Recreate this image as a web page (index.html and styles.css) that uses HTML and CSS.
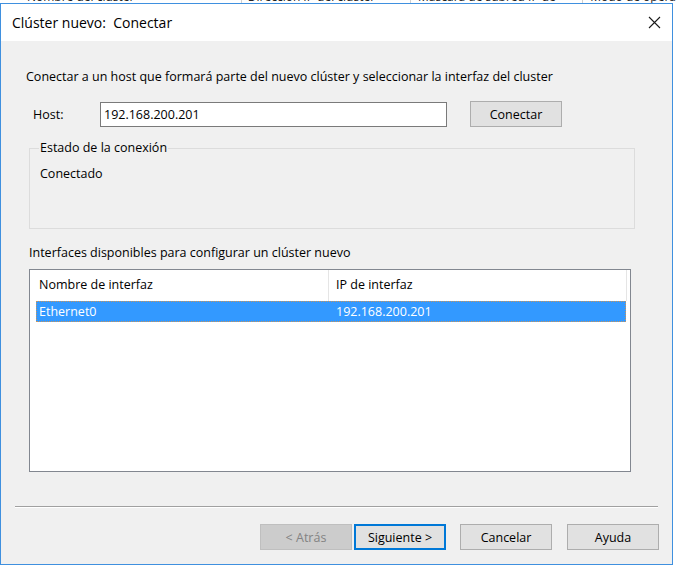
FILE: index.html
```html
<!DOCTYPE html>
<html lang="es">
  <head>
    <meta charset="UTF-8" />
    <meta name="viewport" content="width=device-width, initial-scale=1.0" />
    <title>Clúster nuevo: Conectar</title>
    <link rel="stylesheet" href="styles.css">
  </head>

  <body>
    <!-- columnas de la ventana de atrás, casi tapadas -->
    <div class="behind">
      <span class="behind-col c1">Nombre del clúster</span>
      <span class="behind-col c2">Dirección IP del clúster</span>
      <span class="behind-col c3">Máscara de subred IP de</span>
      <span class="behind-col c4">Modo de opera</span>
    </div>

    <div class="window">
      <header class="titlebar">
        <span class="title">Clúster nuevo:&nbsp; Conectar</span>
        <svg class="close" width="13" height="13" viewBox="0 0 13 13">
          <path d="M1 1 L12 12 M12 1 L1 12" stroke="#1a1a1a" stroke-width="1.1" fill="none" />
        </svg>
      </header>

      <main class="content">
        <p class="intro">Conectar a un host que formará parte del nuevo clúster y seleccionar la interfaz del cluster</p>

        <div class="host-row">
          <label class="host-label" for="host">Host:</label>
          <input class="host-input" id="host" type="text" value="192.168.200.201" />
          <button class="btn btn-connect">Conectar</button>
        </div>

        <fieldset class="group">
          <legend>Estado de la conexión</legend>
          <div class="status">Conectado</div>
        </fieldset>

        <p class="list-caption">Interfaces disponibles para configurar un clúster nuevo</p>

        <section class="listview">
          <div class="lv-header">
            <div class="lv-col lv-col--name">Nombre de interfaz</div>
            <div class="lv-col lv-col--ip">IP de interfaz</div>
          </div>
          <div class="lv-row selected">
            <div class="lv-cell lv-cell--name">Ethernet0</div>
            <div class="lv-cell lv-cell--ip">192.168.200.201</div>
          </div>
        </section>

        <div class="separator"></div>

        <footer class="buttons">
          <button class="btn btn-wide" disabled>&lt; Atrás</button>
          <button class="btn btn-wide btn-default">Siguiente &gt;</button>
          <button class="btn btn-wide btn-cancel">Cancelar</button>
          <button class="btn btn-wide btn-help">Ayuda</button>
        </footer>
      </main>
    </div>
  </body>
</html>
```

FILE: styles.css
```css
* {
  box-sizing: border-box;
}
body {
  margin: 0;
  background: #fff;
  font-family: "Open Sans", "Liberation Sans", sans-serif;
  font-size: 12.5px;
  color: #000;
}

/* ventana de atrás */
.behind {
  height: 3px;
  overflow: hidden;
  display: flex;
  white-space: nowrap;
  font-size: 12px;
  line-height: 12px;
  color: #222;
}
.behind-col {
  display: block;
  margin-top: -9px;
  height: 12px;
  border-right: 1px solid #cfcfcf;
}
.c1 {
  width: 248px;
  padding-left: 27px;
}
.c2 {
  width: 174px;
  padding-left: 6px;
}
.c3 {
  width: 177px;
  padding-left: 7px;
}
.c4 {
  flex: 1;
  padding-left: 7px;
  border-right: 0;
}

/* diálogo */
.window {
  width: 673px;
  height: 562px;
  border: 1px solid #3f90df;
  background: #f0f0f0;
}
.titlebar {
  height: 37px;
  background: #fff;
  display: flex;
  align-items: center;
  justify-content: space-between;
  padding: 0 11px 0 11px;
}
.title {
  font-size: 14px;
  color: #000;
}
.close {
  display: block;
}

.content {
  padding-top: 28px;
}
.intro {
  margin: 0 0 0 25px;
  line-height: 16px;
}

.host-row {
  display: flex;
  align-items: center;
  height: 26px;
  margin-top: 16px;
}
.host-label {
  width: 67px;
  margin-left: 32px;
}
.host-input {
  width: 347px;
  height: 25px;
  border: 1px solid #7a7a7a;
  background: #fff;
  font: inherit;
  padding: 0 0 0 3px;
  color: #000;
  outline: none;
}
.btn {
  height: 26px;
  border: 1px solid #adadad;
  background: #e1e1e1;
  font: inherit;
  color: #000;
  padding: 0;
}
.btn-connect {
  width: 92px;
  margin-left: 23px;
}

.group {
  margin: 13px 0 0 28px;
  width: 606px;
  height: 89px;
  padding: 0 0 0 9px;
  border: 1px solid #dcdcdc;
  min-inline-size: 0;
}
.group legend {
  padding: 0 1px;
  line-height: 16px;
}
.status {
  margin: 10px 0 0 1px;
  line-height: 16px;
}

.list-caption {
  margin: 16px 0 0 28px;
  line-height: 16px;
}

.listview {
  margin: 8px 0 0 28px;
  width: 602px;
  height: 203px;
  border: 1px solid #828790;
  background: #fff;
}
.lv-header {
  display: flex;
  height: 31px;
}
.lv-col {
  line-height: 30px;
  border-right: 1px solid #e5e5e5;
  height: 31px;
}
.lv-col--name {
  width: 299px;
  padding-left: 9px;
}
.lv-col--ip {
  width: 298px;
  padding-left: 7px;
}
.lv-row {
  display: flex;
  margin-left: 6px;
  width: 590px;
  height: 21px;
  line-height: 19px;
}
.lv-row.selected {
  background: #3399ff;
  color: #fff;
  border: 1px dotted #c9945a;
}
.lv-cell--name {
  width: 291px;
  padding-left: 2px;
}
.lv-cell--ip {
  padding-left: 8px;
}

.separator {
  margin: 34px 0 0 14px;
  width: 643px;
  border-top: 1px solid #a0a0a0;
  border-bottom: 1px solid #fff;
}

.buttons {
  display: flex;
  margin: 16px 0 0 259px;
}
.btn-wide {
  width: 92px;
}
.btn[disabled] {
  background: #cccccc;
  border-color: #bfbfbf;
  color: #838383;
}
.btn-default {
  margin-left: 2px;
  border: 2px solid #0078d7;
}
.btn-cancel {
  margin-left: 14px;
}
.btn-help {
  margin-left: 15px;
}
```
